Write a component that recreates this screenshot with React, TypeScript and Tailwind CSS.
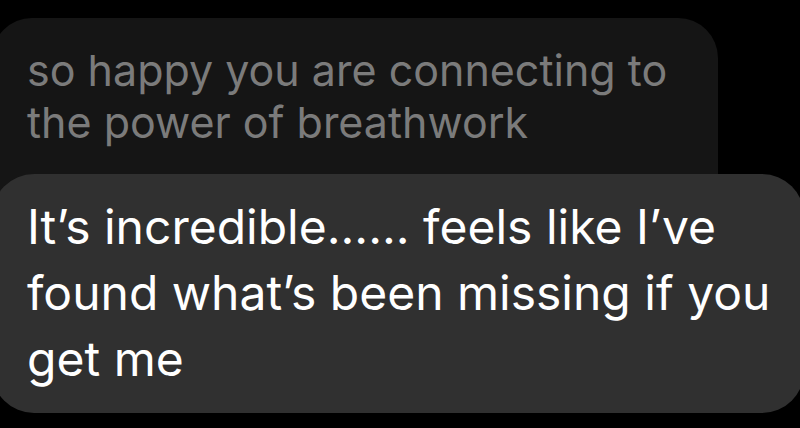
import React from 'react';

const font = { fontFamily: 'Inter, Roboto, "Liberation Sans", sans-serif' };

export default function App() {
  return (
    <div className="w-[800px] h-[428px] overflow-hidden bg-black" style={font}>
      {/* tail of the previous message, cut off by the top edge */}
      <div className="h-[18px] overflow-hidden">
        <div className="mt-[-49px] flex text-[44px] leading-[52px] text-[#9a9a9a] whitespace-nowrap">
          <span className="ml-[240px]">(</span>
          <span className="ml-[122px]">)</span>
        </div>
      </div>

      {/* incoming message */}
      <div className="ml-[-8px] w-[726px] h-[200px] rounded-[40px] bg-[#151515] pl-[35px] pt-[26px]">
        <p className="text-[43px] leading-[52px] text-[#7b7b7b] whitespace-nowrap">
          so happy you are connecting to
          <br />
          the power of breathwork
        </p>
      </div>

      {/* reply */}
      <div className="relative z-10 mt-[-44px] ml-[-8px] w-[812px] rounded-[42px] bg-[#303030] pl-[35px] pt-[20px] pb-[21px]">
        <p className="text-[48px] leading-[66px] text-white whitespace-nowrap">
          It’s incredible...... feels like I’ve
          <br />
          found what’s been missing if you
          <br />
          get me
        </p>
      </div>
    </div>
  );
}
